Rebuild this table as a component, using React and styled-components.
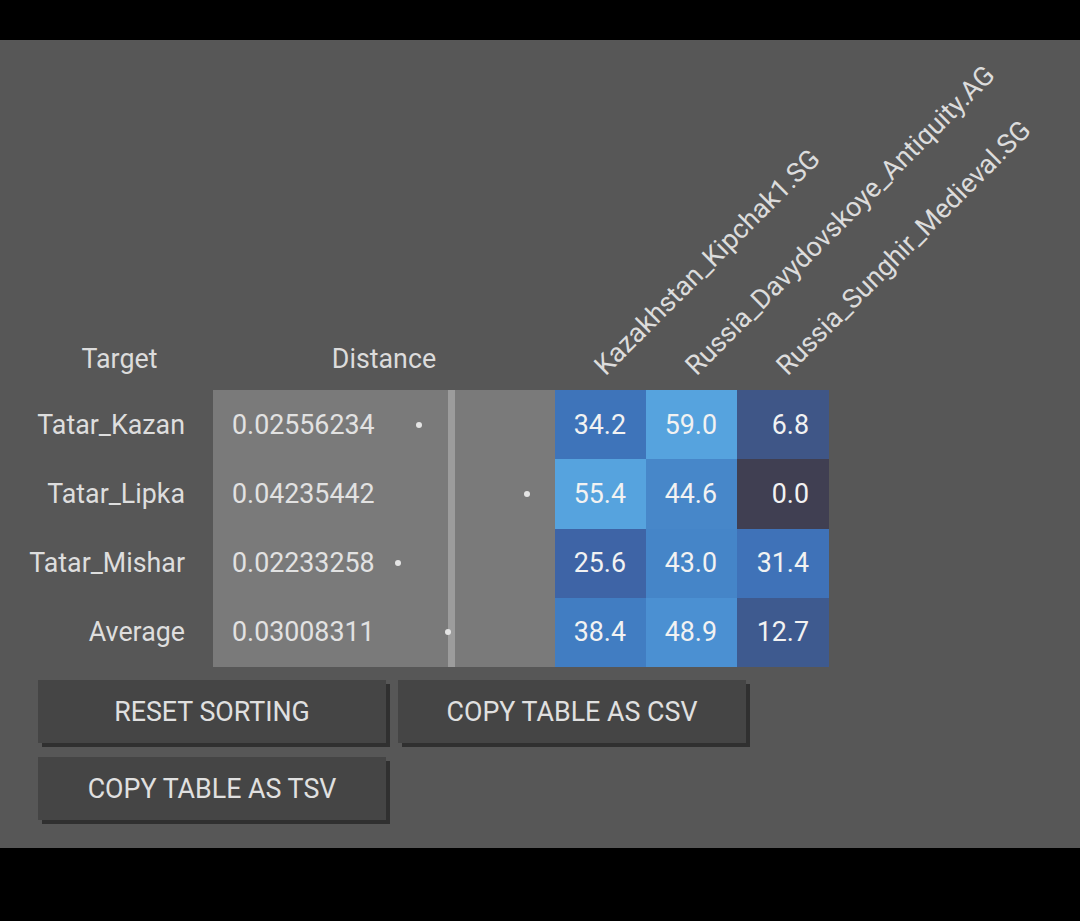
import React from "react"
import styled, {createGlobalStyle} from "styled-components"

const GlobalStyle = createGlobalStyle`
  html, body {
    margin: 0;
    background: #000;
  }
  body {
    font-family: Roboto, "Liberation Sans", sans-serif;
  }
`

const Screen = styled.div`
  margin-top: 40px;
  height: 808px;
  padding-left: 26px;
  box-sizing: border-box;
  background: #575757;
  color: #dedede;
`

const Table = styled.table`
  border-collapse: collapse;
  border-spacing: 0;
  table-layout: fixed;
  font-size: 26.8px;
`

const HeadCell = styled.th`
  position: relative;
  width: ${props => props.width}px;
  height: 335px;
  padding: 0 0 15px;
  vertical-align: bottom;
  text-align: center;
  font-weight: normal;
  line-height: 31px;
  color: #dcdcdc;
`

const RotatedLabel = styled.div`
  position: absolute;
  left: calc(50% + 8px);
  bottom: 10px;
  font-size: 27px;
  line-height: 1;
  white-space: nowrap;
  transform-origin: 0 100%;
  transform: rotate(-45deg);
`

const Row = styled.tr`
  height: 69.25px;
`

const TargetCell = styled.td`
  padding: 0 28px 0 0;
  text-align: right;
  color: #dedede;
`

const DistanceCell = styled.td`
  position: relative;
  padding: 0 0 0 19px;
  background: #7a7a7a;
  color: #e2e2e2;

  &::after {
    content: "";
    position: absolute;
    top: 0;
    bottom: 0;
    left: 235px;
    width: 7px;
    background: #9c9c9c;
  }
`

const Dot = styled.span`
  position: absolute;
  top: 50%;
  width: 6px;
  height: 6px;
  margin: -3px 0 0 -3px;
  border-radius: 50%;
  background: #e4e4e4;
  z-index: 1;
`

const ValueCell = styled.td`
  padding: 0 20px 0 0;
  text-align: right;
  color: #f2f2f2;
  background: ${props => props.color};
`

const Buttons = styled.div`
  display: grid;
  grid-template-columns: 348px 348px;
  gap: 14px 12px;
  margin: 13px 0 0 12px;
`

const Button = styled.button`
  height: 63px;
  padding: 0;
  border: 0;
  background: #454545;
  box-shadow: 4px 4px 0 #303030;
  color: #e0e0e0;
  font-family: Roboto, "Liberation Sans", sans-serif;
  font-size: 26.8px;
  text-transform: uppercase;
  outline: 0;
`

const sources = [
  "Kazakhstan_Kipchak1.SG",
  "Russia_Davydovskoye_Antiquity.AG",
  "Russia_Sunghir_Medieval.SG"
]

const rows = [
  {target: "Tatar_Kazan", distance: "0.02556234", values: ["34.2", "59.0", "6.8"], colors: ["#3e74ba", "#56a3de", "#3f5687"]},
  {target: "Tatar_Lipka", distance: "0.04235442", values: ["55.4", "44.6", "0.0"], colors: ["#56a3de", "#4787c9", "#403f52"]},
  {target: "Tatar_Mishar", distance: "0.02233258", values: ["25.6", "43.0", "31.4"], colors: ["#3e64a6", "#4585c8", "#3f72b8"]},
  {target: "Average", distance: "0.03008311", values: ["38.4", "48.9", "12.7"], colors: ["#417dc2", "#4b90d2", "#3e5a8f"]}
]

// dot offset inside the distance cell, scaled from the value
const dotLeft = value => 41 + parseFloat(value) * 6444

const App = () => (
  <>
    <GlobalStyle />
    <Screen>
      <Table>
        <thead>
          <tr>
            <HeadCell width={187}>Target</HeadCell>
            <HeadCell width={342}>Distance</HeadCell>
            {sources.map((source, i) => (
              <HeadCell key={source} width={i === 2 ? 92 : 91}>
                <RotatedLabel>{source}</RotatedLabel>
              </HeadCell>
            ))}
          </tr>
        </thead>
        <tbody>
          {rows.map(row => (
            <Row key={row.target}>
              <TargetCell>{row.target}</TargetCell>
              <DistanceCell>
                {row.distance}
                <Dot style={{left: dotLeft(row.distance)}} />
              </DistanceCell>
              {row.values.map((value, i) => (
                <ValueCell key={i} color={row.colors[i]}>
                  {value}
                </ValueCell>
              ))}
            </Row>
          ))}
        </tbody>
      </Table>
      <Buttons>
        <Button>Reset sorting</Button>
        <Button>Copy table as CSV</Button>
        <Button>Copy table as TSV</Button>
      </Buttons>
    </Screen>
  </>
)

export default App
